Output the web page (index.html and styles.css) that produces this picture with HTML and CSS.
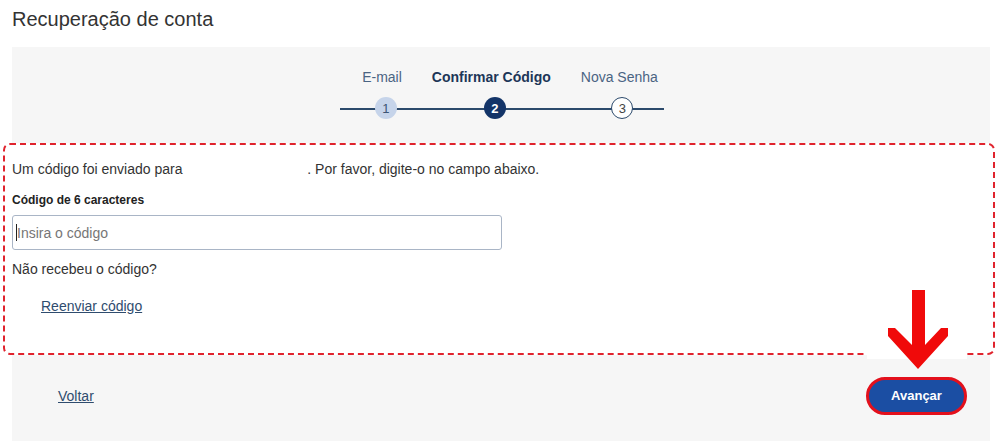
FILE: index.html
```html
<!DOCTYPE html>
<html lang="pt-BR">
<head>
<meta charset="utf-8">
<title>Recuperação de conta</title>
<link rel="stylesheet" href="styles.css">
</head>
<body>
<h1 class="page-title">Recuperação de conta</h1>
<div class="panel">
  <div class="stepper">
    <div class="step-line"></div>
    <div class="step done">
      <span class="step-label">E-mail</span>
      <span class="step-dot">1</span>
    </div>
    <div class="step current">
      <span class="step-label">Confirmar Código</span>
      <span class="step-dot">2</span>
    </div>
    <div class="step next">
      <span class="step-label">Nova Senha</span>
      <span class="step-dot">3</span>
    </div>
  </div>

  <div class="card">
    <p class="intro">Um código foi enviado para <span class="masked"></span>. Por favor, digite-o no campo abaixo.</p>
    <label class="field-label" for="code">Código de 6 caracteres</label>
    <div class="input-box">
      <span class="caret"></span>
      <input id="code" class="code-input" type="text" placeholder="Insira o código">
    </div>
    <p class="resend-q">Não recebeu o código?</p>
    <a class="resend-link" href="#">Reenviar código</a>
  </div>

  <div class="footer">
    <a class="back-link" href="#">Voltar</a>
    <button class="next-btn" type="button">Avançar</button>
  </div>
</div>

<svg class="arrow" width="100" height="90" viewBox="0 0 100 90" aria-hidden="true">
  <rect x="0" y="61" width="100" height="8" fill="#ffffff"/>
  <polygon fill="#f00a0a" points="45,0 58,0 58,55 74,38 81,38 81,46 51,79 21,46 21,38 28,38 45,55"/>
</svg>
</body>
</html>
```

FILE: styles.css
```css
* { box-sizing: border-box; }

html, body {
  margin: 0;
  padding: 0;
  background: #ffffff;
}

body {
  font-family: "Liberation Sans", Arial, sans-serif;
  color: #333333;
  width: 1000px;
  height: 444px;
  position: relative;
  overflow: hidden;
}

.page-title {
  margin: 0;
  padding: 7px 0 0 12px;
  height: 47px;
  font-size: 20px;
  font-weight: normal;
  color: #333333;
  line-height: 24px;
}

.panel {
  margin-left: 12px;
  width: 978px;
  height: 394px;
  background: #f6f6f6;
  display: flex;
  flex-direction: column;
}

/* Stepper */
.stepper {
  position: relative;
  align-self: center;
  display: flex;
  gap: 30px;
  padding: 22px 6px 0 22px;
  height: 96px;
  margin-left: 2px;
}

.step-line {
  position: absolute;
  left: 0;
  right: 0;
  top: 61px;
  height: 2px;
  background: #2c4a6c;
}

.step {
  display: flex;
  flex-direction: column;
  align-items: center;
  position: relative;
}

.step-label {
  font-size: 14px;
  line-height: 16px;
  color: #4a6483;
  white-space: nowrap;
}

.step.current .step-label {
  font-weight: bold;
  color: #1d3658;
}

.step-dot {
  margin-top: 12px;
  width: 22px;
  height: 22px;
  border-radius: 50%;
  display: flex;
  align-items: center;
  justify-content: center;
  font-size: 13px;
  line-height: 1;
  position: relative;
  z-index: 1;
}

.step.done .step-dot {
  background: #c6d4ea;
  color: #3d5574;
  margin-left: 8px;
}

.step.current .step-dot {
  background: #133468;
  color: #ffffff;
  font-weight: bold;
  margin-left: 7px;
}

.step.next .step-dot {
  background: #ffffff;
  border: 1px solid #2c4a6c;
  color: #444444;
  margin-left: 6px;
}

/* Card */
.card {
  margin: 0 -5px 0 -9px;
  height: 212px;
  background: #ffffff;
  border: 2px dashed #e0232d;
  border-radius: 7px;
  padding: 15px 7px 0 7px;
}

.intro {
  margin: 0;
  font-size: 14px;
  line-height: 18px;
  color: #333333;
}

.masked {
  display: inline-block;
  width: 121px;
}

.field-label {
  display: block;
  margin-top: 15px;
  font-size: 12px;
  font-weight: bold;
  line-height: 14px;
  color: #222222;
}

.input-box {
  position: relative;
  margin-top: 8px;
  width: 490px;
  height: 35px;
  border: 1px solid #a9b5c6;
  border-radius: 3px;
  background: #ffffff;
}

.caret {
  position: absolute;
  left: 3px;
  top: 8px;
  width: 1px;
  height: 17px;
  background: #222222;
}

.code-input {
  width: 100%;
  height: 100%;
  border: 0;
  outline: none;
  background: transparent;
  padding: 0 0 0 4px;
  font-family: "Liberation Sans", Arial, sans-serif;
  font-size: 14px;
  color: #333333;
}

.code-input::placeholder {
  color: #767676;
}

.resend-q {
  margin: 11px 0 0 0;
  font-size: 14px;
  line-height: 16px;
  color: #333333;
}

.resend-link {
  display: inline-block;
  margin: 21px 0 0 29px;
  font-size: 14px;
  line-height: 16px;
  color: #2f4c6e;
  text-decoration: underline;
}

/* Footer */
.footer {
  flex: 1;
  display: flex;
  align-items: center;
  justify-content: space-between;
  padding: 0 23px 6px 46px;
}

.back-link {
  font-size: 14px;
  color: #2f4c6e;
  text-decoration: underline;
  margin-top: 2px;
}

.next-btn {
  width: 101px;
  height: 38px;
  border-radius: 19px;
  border: 3px solid #e3101c;
  background: #1b4ea3;
  color: #ffffff;
  font-family: "Liberation Sans", Arial, sans-serif;
  font-size: 13px;
  font-weight: bold;
  padding: 0;
  margin-top: 1px;
}

/* Overlay annotation arrow */
.arrow {
  position: absolute;
  left: 867px;
  top: 290px;
}
```
